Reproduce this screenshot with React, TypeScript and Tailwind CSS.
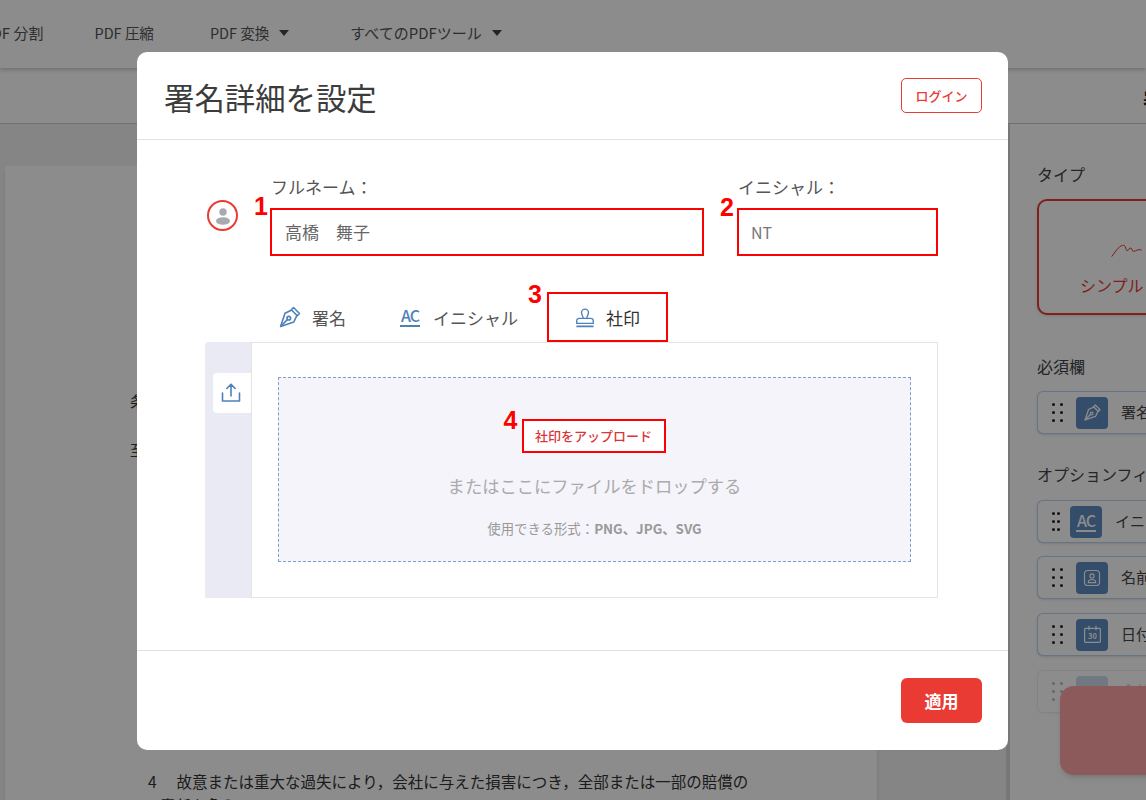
import React from "react";

const jp = "font-['Noto_Sans_CJK_JP','Noto_Sans',sans-serif]";

function Nib({ className }: { className?: string }) {
  return (
    <svg viewBox="0 0 24 24" fill="none" stroke="currentColor" strokeWidth="1.6" strokeLinejoin="round" strokeLinecap="round" className={className}>
      <path d="M15.500 2.500l6 6-2.200 2.200-6-6z" />
      <path d="M13.300 5.200L7 8.200 2.600 21.400 15.800 17l3-6.300" />
      <path d="M2.800 21.200l6.600-6.600" />
      <circle cx="10.800" cy="13.200" r="1.800" />
    </svg>
  );
}

function AcIcon({ light }: { light?: boolean }) {
  return (
    <div className={`flex w-[20px] flex-col items-center ${light ? "text-white" : "text-[#4f81b8]"}`}>
      <span className={`${jp} text-[16px] leading-[16px] font-medium tracking-[-1px]`}>AC</span>
      <span className="mt-[2px] h-[2px] w-[20px] bg-current"></span>
    </div>
  );
}

function Stamp({ className }: { className?: string }) {
  return (
    <svg viewBox="0 0 24 24" fill="none" stroke="currentColor" strokeWidth="1.500" strokeLinejoin="round" strokeLinecap="round" className={className}>
      <path d="M10 13.500c.3-2.200-1.800-3.500-1.800-6.300a3.800 3.800 0 017.600 0c0 2.800-2.100 4.100-1.800 6.300" />
      <path d="M3 19v-2.800a2.700 2.700 0 012.700-2.700h12.600a2.700 2.700 0 012.700 2.700V19z" />
      <path d="M3.500 22.300h17" strokeWidth="2" />
    </svg>
  );
}

function Badge({ n, className }: { n: string; className: string }) {
  return (
    <span className={`absolute font-['Liberation_Sans',sans-serif] text-[25px] leading-none font-bold text-[#ff0000] [text-shadow:0_0_3px_#fff] ${className}`}>
      {n}
    </span>
  );
}

function Caret() {
  return <span className="ml-[10px] h-0 w-0 border-x-[5px] border-t-[6px] border-x-transparent border-t-[#444]"></span>;
}

function Dots() {
  return (
    <div className="grid w-[11px] grid-cols-2 gap-x-[5px] gap-y-[5px]">
      {[0, 1, 2, 3, 4, 5].map((i) => (
        <span key={i} className="h-[3px] w-[3px] rounded-full bg-[#222]"></span>
      ))}
    </div>
  );
}

function FieldRow({ label, icon, className }: { label: string; icon: React.ReactNode; className?: string }) {
  return (
    <div className={`flex h-[43px] w-[140px] items-center rounded-l-[6px] border border-r-0 border-[#bcd3ee] bg-white pl-[14px] shadow-sm ${className ?? ""}`}>
      <Dots />
      <div className="ml-[13px] flex h-[32px] w-[32px] shrink-0 items-center justify-center rounded-[4px] bg-[#5d8cc4] text-white">
        {icon}
      </div>
      <span className="ml-[13px] text-[15px] whitespace-nowrap text-[#444]">{label}</span>
    </div>
  );
}

function App() {
  return (
    <div className={`relative h-[800px] w-[1146px] overflow-hidden bg-white ${jp}`}>
      {/* page behind the dialog */}
      <header className="relative z-10 flex h-[68px] items-center whitespace-nowrap bg-white pb-[2px] text-[15px] text-[#555] shadow-[0_2px_4px_rgba(0,0,0,0.2)]">
        <span className="-ml-[18px]">PDF 分割</span>
        <span className="ml-[51px] text-[14.500px]">PDF 圧縮</span>
        <span className="ml-[56px] text-[14.500px]">PDF 変換</span>
        <Caret />
        <span className="ml-[61px]">すべてのPDFツール</span>
        <Caret />
      </header>
      <div className="flex h-[56px] items-center justify-end overflow-hidden border-b border-[#ccc] bg-white pt-[8px]">
        <span className="-mr-[33px] text-[18px] font-bold text-[#222]">署名</span>
      </div>
      <div className="flex h-[676px]">
        <main className="min-w-0 flex-1 bg-[#f3f3f3] pt-[42px] pl-[5px]">
          <div className="h-[640px] w-[872px] overflow-hidden bg-white pt-[224px] pl-[125px] text-[15px] text-[#333] shadow-md">
            <p className="h-[49px]">条</p>
            <p>至</p>
            <div className="mt-[308px] ml-[18px] w-[640px] text-[15.500px]">
              <p className="h-[24px] whitespace-nowrap"><span className="mr-[20px]">4</span>故意または重大な過失により，会社に与えた損害につき，全部または一部の賠償の</p>
              <p className="pl-[12px] whitespace-nowrap">責任を負う。</p>
            </div>
          </div>
        </main>
        <aside className="relative w-[140px] shrink-0 overflow-hidden border-l-[4px] border-[#d9d9d9] bg-white pl-[27px]">
          <span className="absolute top-0 -left-[2px] h-[346px] w-[2px] bg-[#e93a33]"></span>
          <h3 className="pt-[38px] text-[16px] leading-[24px] text-[#444]">タイプ</h3>
          <div className="mt-[13px] h-[116px] w-[140px] rounded-l-[10px] border-2 border-r-0 border-[#e93a33] bg-white pt-[41px] pl-[41px] shadow-sm">
            <svg viewBox="0 0 60 24" className="ml-[31px] h-[16px] w-[40px] text-[#e93a33]" fill="none" stroke="currentColor" strokeWidth="1.500">
              <path d="M1 22C8 12 14 4 19 5c4 1 3 8 5 8 3 0 3-5 6-4 2 1 1 5 4 5 3 0 6-4 12-2" />
            </svg>
            <p className="mt-[15px] text-[16px] leading-[24px] whitespace-nowrap text-[#e93a33]">シンプル</p>
          </div>
          <h3 className="mt-[39px] text-[16px] leading-[24px] text-[#444]">必須欄</h3>
          <FieldRow className="mt-[13px]" label="署名" icon={<Nib className="h-[19px] w-[19px]" />} />
          <h3 className="mt-[28px] text-[16px] leading-[24px] whitespace-nowrap text-[#444]">オプションフィールド</h3>
          <FieldRow className="mt-[14px]" label="イニシャル" icon={<AcIcon light />} />
          <FieldRow className="mt-[13px]" label="名前" icon={
            <svg viewBox="0 0 24 24" fill="none" stroke="currentColor" strokeWidth="1.400" className="h-[20px] w-[20px]">
              <rect x="3" y="3" width="18" height="18" rx="4" />
              <circle cx="12" cy="9.500" r="2.500" />
              <path d="M7.500 17.500c0-5 9-5 9 0z" />
            </svg>
          } />
          <FieldRow className="mt-[14px]" label="日付" icon={
            <svg viewBox="0 0 24 24" fill="none" stroke="currentColor" strokeWidth="1.400" className="h-[21px] w-[21px]">
              <rect x="3" y="5" width="18" height="16" rx="1" />
              <path d="M8 2v5M16 2v5" />
              <text x="12" y="17.500" textAnchor="middle" fontSize="8.500" fontWeight="700" fill="currentColor" stroke="none">30</text>
            </svg>
          } />
          <FieldRow className="mt-[14px] opacity-30" label="会社" icon={null} />
          <div className="absolute top-[562px] left-[50px] h-[89px] w-[110px] rounded-[14px] bg-[#ffa5a5] shadow-md"></div>
        </aside>
      </div>

      {/* dim layer */}
      <div className="absolute inset-0 z-20 bg-black/45"></div>

      {/* dialog */}
      <div className="absolute top-[52px] left-[137px] z-30 flex h-[698px] w-[871px] flex-col rounded-[10px] bg-white">
        <div className="flex h-[88px] shrink-0 items-center justify-between border-b border-[#e2e2e2] pr-[26px] pl-[27px]">
          <h2 className="pt-[2px] text-[30.400px] leading-[40px] text-[#3c3c3c]">署名詳細を設定</h2>
          <button className="h-[35px] w-[81px] rounded-[5px] border border-[#e93a33] text-[13px] font-medium text-[#e93a33]">ログイン</button>
        </div>

        <div className="flex-1 pt-[36px] pl-[68px]">
          <div className="ml-[2px] flex">
            <div className="mt-[24px] flex h-[31px] w-[31px] items-center justify-center rounded-full border-2 border-[#e93a33] text-[#a9a9b1]">
              <svg viewBox="0 0 24 24" fill="currentColor" className="h-[24px] w-[24px]">
                <circle cx="12" cy="8" r="3.700" />
                <ellipse cx="12" cy="17" rx="7" ry="3.800" />
              </svg>
            </div>
            <div className="relative ml-[32px] w-[434px]">
              <Badge n="1" className="top-[18px] -left-[16px]" />
              <label className="-mt-[1px] block pl-[1px] text-[17px] leading-[24px] text-[#555]">フルネーム：</label>
              <div className="mt-[9px] flex h-[48px] items-center border-2 border-[#ff0000] pl-[13px] text-[17px] text-[#666]">高橋　舞子</div>
            </div>
            <div className="relative ml-[33px] w-[201px]">
              <Badge n="2" className="top-[19px] -left-[17px]" />
              <label className="-mt-[1px] block pl-[1px] text-[17px] leading-[24px] text-[#555]">イニシャル：</label>
              <div className="mt-[9px] flex h-[48px] items-center border-2 border-[#ff0000] pl-[12px] text-[16px] text-[#777]">NT</div>
            </div>
          </div>

          <div className="mt-[36px] flex h-[50px] items-center pl-[73px] text-[17px] text-[#555]">
            <Nib className="h-[24px] w-[24px] text-[#4f81b8]" />
            <span className="mt-[2px] ml-[10px]">署名</span>
            <div className="ml-[54px]"><AcIcon /></div>
            <span className="mt-[2px] ml-[13px]">イニシャル</span>
            <div className="relative ml-[29px] flex h-[50px] w-[121px] items-center border-2 border-[#ff0000] pl-[25px] text-[#333]">
              <Badge n="3" className="top-[-12px] -left-[21px]" />
              <Stamp className="h-[22px] w-[22px] text-[#4f81b8]" />
              <span className="mt-[2px] ml-[10px]">社印</span>
            </div>
          </div>

          <div className="flex h-[256px] w-[733px]">
            <div className="w-[46px] shrink-0 rounded-tl-[4px] bg-[#e9eaf3] pt-[31px] pl-[8px]">
              <div className="flex h-[40px] w-[38px] items-center justify-center rounded-l-[4px] bg-white pr-[2px] text-[#4f81b8]">
                <svg viewBox="0 0 24 24" fill="none" stroke="currentColor" strokeWidth="1.600" strokeLinecap="round" strokeLinejoin="round" className="h-[24px] w-[24px]">
                  <path d="M12 15V3.500M7.800 7.500L12 3.200l4.200 4.300" />
                  <path d="M3.500 12v8h17v-8" />
                </svg>
              </div>
            </div>
            <div className="flex-1 border border-[#e4e4e4] pt-[34px] pl-[26px]">
              <div className="flex h-[185px] w-[633px] flex-col items-center border border-dashed border-[#7f9ccf] bg-[#f4f4fa] pt-[41px]">
                <div className="relative mr-[2px]">
                  <Badge n="4" className="top-[-11px] -left-[18px]" />
                  <button className="h-[34px] w-[144px] border-2 border-[#ff0000] bg-white text-[13px] font-medium text-[#d9363a]">社印をアップロード</button>
                </div>
                <p className="mt-[21px] text-[17.300px] leading-[24px] text-[#aaaaaa]">またはここにファイルをドロップする</p>
                <p className="mt-[21px] text-[13.400px] leading-[18px] text-[#999]">使用できる形式：<b>PNG、JPG、SVG</b></p>
              </div>
            </div>
          </div>
        </div>

        <div className="flex h-[100px] shrink-0 items-center justify-end border-t border-[#e2e2e2] pr-[26px]">
          <button className="h-[45px] w-[81px] rounded-[6px] bg-[#e93a33] text-[17px] font-bold text-white">適用</button>
        </div>
      </div>
    </div>
  );
}

export default App;
